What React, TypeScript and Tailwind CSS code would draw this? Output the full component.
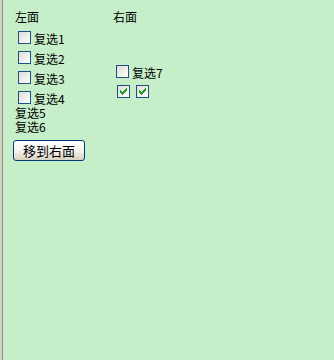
import React from "react";

const font = { fontFamily: '"Noto Sans CJK SC", "Noto Sans", sans-serif' };

const CHECK = [
  "......x",
  ".....xx",
  "x...xxx",
  "xx.xxx.",
  "xxxxx..",
  ".xxx...",
  "..x....",
];

function Box({ checked = false }: { checked?: boolean }) {
  return (
    <div className="relative h-[13px] w-[13px] shrink-0 border border-[#1c5180] bg-gradient-to-br from-[#dcdcd7] to-[#ffffff]">
      {checked && (
        <svg className="absolute left-[2px] top-[2px]" width="7" height="7" viewBox="0 0 7 7" shapeRendering="crispEdges">
          {CHECK.flatMap((row, y) =>
            row.split("").map((c, x) =>
              c === "x" ? <rect key={`${x}-${y}`} x={x} y={y} width="1" height="1" fill="#21a121" /> : null
            )
          )}
        </svg>
      )}
    </div>
  );
}

function Row({ label }: { label: string }) {
  return (
    <div className="flex h-[20px] items-start">
      <div className="ml-[3px] mt-[5px]">
        <Box />
      </div>
      <span className="ml-[3px] mt-[5px] text-[12px] leading-4 text-black">{label}</span>
    </div>
  );
}

export default function App() {
  return (
    <div className="flex h-[360px] w-[334px] bg-[#c6efc9]" style={font}>
      <div className="w-[2px] bg-[#d4d0c8]" />
      <div className="w-[1px] bg-[#9a917d]" />
      <div className="flex pl-[12px]">
        <div className="flex w-[98px] flex-col">
          <div className="mt-[9px] h-4 text-[12px] leading-4 text-black">左面</div>
          <div className="mt-[1px] flex flex-col">
            <Row label="复选1" />
            <Row label="复选2" />
            <Row label="复选3" />
            <Row label="复选4" />
          </div>
          <div className="h-[14px] text-[12px] leading-[14px] text-black">复选5</div>
          <div className="h-[14px] text-[12px] leading-[14px] text-black">复选6</div>
          <button className="ml-[-2px] mt-[6px] flex h-[21px] w-[72px] items-center justify-center rounded-[3px] border border-[#003c74] bg-gradient-to-b from-[#ffffff] via-[#f4f3ee] to-[#d8d2c2] text-[13px] leading-4 text-black">
            移到右面
          </button>
        </div>
        <div className="flex flex-col">
          <div className="mt-[9px] h-4 text-[12px] leading-4 text-black">右面</div>
          <div className="mt-[35px]">
            <Row label="复选7" />
          </div>
          <div className="flex h-[20px] items-start gap-[6px] pl-[4px]">
            <div className="mt-[5px]">
              <Box checked />
            </div>
            <div className="mt-[5px]">
              <Box checked />
            </div>
          </div>
        </div>
      </div>
    </div>
  );
}
